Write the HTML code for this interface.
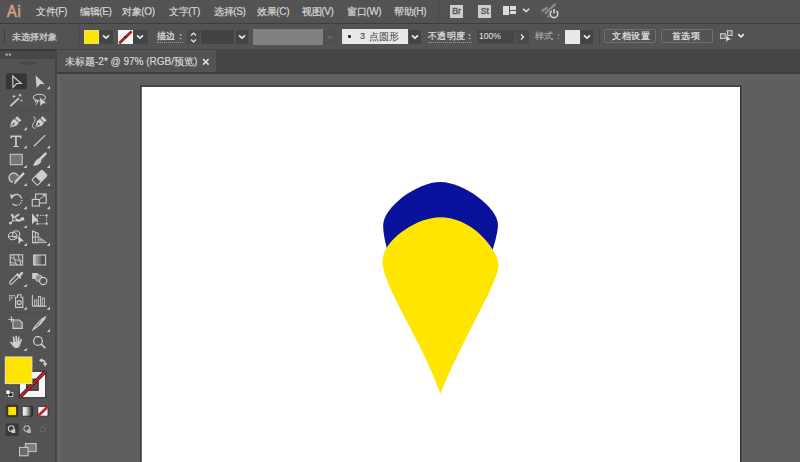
<!DOCTYPE html>
<html><head><meta charset="utf-8">
<style>
*{margin:0;padding:0;box-sizing:border-box}
html,body{width:800px;height:462px;overflow:hidden;background:#5e5e5e;font-family:"Liberation Sans",sans-serif;position:relative}
.a{position:absolute}
.t{position:absolute;white-space:nowrap;color:#d6d6d6;font-size:10px;line-height:12px;-webkit-text-stroke:0.2px currentColor}
#menubar{left:0;top:0;width:800px;height:24px;background:#535353;border-bottom:1px solid #3c3c3c}
#ctrl{left:0;top:24px;width:800px;height:26.6px;background:#535353;border-bottom:2px solid #383838}
#tabbar{left:56px;top:49px;width:744px;height:25px;background:#444444}
#tab{left:57px;top:50px;width:159px;height:22px;background:#535353}
#tabline{left:56px;top:72px;width:744px;height:2px;background:#3e3e3e}
#canvas{left:57px;top:74px;width:743px;height:388px;background:#5f5f5f}
#artboard{left:141px;top:86px;width:600px;height:380px;background:#fff;border:1px solid #2c2c2c;box-shadow:1px 1px 2px rgba(0,0,0,.35)}
#phead{left:0;top:50.6px;width:56px;height:8.4px;background:#474747}
#panel{left:0;top:59px;width:57px;height:403px;background:#535353;border-right:2px solid #454545}
#cedge{left:57px;top:74px;width:3px;height:388px;background:#636363}
#pgap{left:0;top:49px;width:57px;height:1px;background:#3a3a3a}
.cb{background:#444}
.cb svg{position:absolute;left:50%;top:50%;margin-left:-4px;margin-top:-2.5px}
.cb2{background:#4a4a4a}
.dl{height:1px;border-top:1px dotted #9a9a9a}
.btn{border:1px solid #707070;border-radius:1.5px}
.ico{background:#cdcdcd;color:#4e4e4e;font-size:8.6px;line-height:12.8px;text-align:center;letter-spacing:0px;-webkit-text-stroke:0.35px #4e4e4e}
</style></head><body>
<div id="menubar" class="a"></div>
<div id="ctrl" class="a"></div>
<div id="canvas" class="a"></div>
<div id="tabbar" class="a"></div>
<div id="tab" class="a"></div>
<div id="tabline" class="a"></div>
<svg class="a" style="left:0;top:0" width="800" height="462"><rect x="140" y="85.2" width="601.7" height="402" fill="none" stroke="#686868" stroke-width="1"/><rect x="140.95" y="86.15" width="599.8" height="400" fill="#fff" stroke="#323232" stroke-width="1.5"/></svg>
<div id="phead" class="a"></div>
<div id="panel" class="a"></div>
<div id="cedge" class="a"></div>

<!-- menu -->
<div class="t" style="left:6.6px;top:2.6px;font-size:16.5px;line-height:17px;color:#d49f7c;-webkit-text-stroke:0.7px #d49f7c;letter-spacing:0.9px;transform:scaleX(0.88);transform-origin:0 0">Ai</div>
<div class="t" style="left:36px;top:6px;letter-spacing:-0.35px">文件(F)</div>
<div class="t" style="left:80px;top:6px;letter-spacing:-0.35px">编辑(E)</div>
<div class="t" style="left:122px;top:6px;letter-spacing:-0.35px">对象(O)</div>
<div class="t" style="left:169px;top:6px;letter-spacing:-0.35px">文字(T)</div>
<div class="t" style="left:214px;top:6px;letter-spacing:-0.35px">选择(S)</div>
<div class="t" style="left:257px;top:6px;letter-spacing:-0.35px">效果(C)</div>
<div class="t" style="left:302px;top:6px;letter-spacing:-0.35px">视图(V)</div>
<div class="t" style="left:347px;top:6px;letter-spacing:-0.35px">窗口(W)</div>
<div class="t" style="left:394px;top:6px;letter-spacing:-0.35px">帮助(H)</div>



<!-- menubar icons -->
<div class="a" style="left:438px;top:1px;width:1px;height:21px;background:#474747"></div>
<div class="a ico" style="left:450px;top:5.3px;width:13.3px;height:12.5px">Br</div>
<div class="a ico" style="left:478.4px;top:5.3px;width:12.7px;height:12.5px">St</div>
<div class="a" style="left:503px;top:6px;width:6px;height:8.5px;background:#dcdcdc"></div>
<div class="a" style="left:510px;top:6px;width:6.3px;height:4px;background:#dcdcdc"></div>
<div class="a" style="left:510px;top:10.8px;width:6.3px;height:3.7px;background:#dcdcdc"></div>
<svg class="a" style="left:520px;top:6px" width="12" height="8"><path d="M3 2.7 L6.1 5.6 L9.2 2.7" fill="none" stroke="#e6e6e6" stroke-width="1.4"/></svg>
<svg class="a" style="left:538px;top:0px" width="26" height="22"><path d="M4.5 10.8 L8.8 8 M7.8 13.2 L16.8 4.5 M10.5 16.5 L13.8 11.5" stroke="#8c8c8c" stroke-width="2.3" fill="none" stroke-linecap="round"/><circle cx="16" cy="13.8" r="5.4" fill="#535353"/><path d="M13.6 10.9 A3.8 3.8 0 1 0 18.4 10.9" fill="none" stroke="#d4d4d4" stroke-width="1.6"/><line x1="16" y1="9" x2="16" y2="13.6" stroke="#d4d4d4" stroke-width="1.6"/></svg>

<!-- control bar -->
<div class="a" style="left:3.5px;top:30px;width:1.5px;height:14px;background:#3e3e3e"></div>
<div class="t" style="left:12px;top:30.5px;font-size:9.4px;line-height:11px;color:#cdcdcd;letter-spacing:0.1px;-webkit-text-stroke:0.3px #cdcdcd">未选择对象</div>
<div class="a" style="left:79px;top:27px;width:1px;height:19px;background:#4a4a4a"></div>
<div class="a" style="left:84px;top:29.5px;width:15px;height:14.5px;background:#ffe600;border:1px solid #e9e27a"></div>
<div class="a cb" style="left:99.5px;top:29.5px;width:13px;height:14.5px"><svg width="8" height="6"><path d="M1 1.3 L4 4.2 L7 1.3" fill="none" stroke="#f0f0f0" stroke-width="1.6"/></svg></div>
<div class="a" style="left:118px;top:29.5px;width:15px;height:14.5px;background:#f4f4f4"></div>
<svg class="a" style="left:118px;top:29.5px" width="15" height="15"><line x1="1.3" y1="13.2" x2="13.5" y2="1.5" stroke="#6a2a2a" stroke-width="2.6"/><line x1="1.3" y1="13.2" x2="13.5" y2="1.5" stroke="#d01818" stroke-width="1.7"/><circle cx="7.3" cy="7.2" r="1.4" fill="#5a2a2a"/></svg>
<div class="a cb" style="left:133px;top:29.5px;width:13.5px;height:14.5px"><svg width="8" height="6"><path d="M1 1.3 L4 4.2 L7 1.3" fill="none" stroke="#f0f0f0" stroke-width="1.6"/></svg></div>
<div class="a" style="left:147px;top:27px;width:1px;height:19px;background:#4a4a4a"></div>
<div class="t" style="left:157px;top:31px;font-size:8.9px;line-height:11px;letter-spacing:0.3px;color:#e2e2e2">描边：</div>
<div class="a dl" style="left:157px;top:42px;width:26px"></div>
<div class="a cb2" style="left:187px;top:29.5px;width:13px;height:14.5px"></div>
<svg class="a" style="left:187px;top:29.5px" width="13" height="15"><path d="M4 5.5 L6.5 3 L9 5.5 M4 9.5 L6.5 12 L9 9.5" fill="none" stroke="#e8e8e8" stroke-width="1.2"/></svg>
<div class="a" style="left:201px;top:29.5px;width:33px;height:14.5px;background:#434343"></div>
<div class="a cb" style="left:235.5px;top:29.5px;width:12.5px;height:14.5px"><svg width="8" height="6"><path d="M1 1.3 L4 4.2 L7 1.3" fill="none" stroke="#f0f0f0" stroke-width="1.6"/></svg></div>
<div class="a" style="left:252.75px;top:28.75px;width:70px;height:16px;background:#808080"></div>
<div class="a" style="left:323px;top:29.5px;width:14px;height:14.5px;background:#505050"></div>
<svg class="a" style="left:323px;top:29.5px" width="14" height="15"><path d="M4.5 6 L7 8.5 L9.5 6" fill="none" stroke="#6e6e6e" stroke-width="1.3"/></svg>
<div class="a" style="left:341.5px;top:29px;width:66.5px;height:15px;background:#e8e8e8"></div>
<div class="a" style="left:348.2px;top:35.2px;width:2.4px;height:2.4px;background:#222;border-radius:1.2px"></div>
<div class="t" style="left:360px;top:31px;font-size:9px;line-height:11px;color:#2e2e2e;-webkit-text-stroke:0px">3</div>
<div class="t" style="left:368.5px;top:31px;font-size:9.5px;line-height:11px;color:#3a3a3a;-webkit-text-stroke:0px">点圆形</div>
<div class="a cb" style="left:409px;top:29.5px;width:12px;height:14.5px"><svg width="8" height="6"><path d="M1 1.3 L4 4.2 L7 1.3" fill="none" stroke="#f0f0f0" stroke-width="1.6"/></svg></div>
<div class="t" style="left:428px;top:31px;font-size:8.9px;line-height:11px;letter-spacing:0.3px;color:#e2e2e2">不透明度：</div>
<div class="a dl" style="left:428px;top:42px;width:44px"></div>
<div class="a" style="left:476.5px;top:29.5px;width:38.5px;height:14px;background:#464646;border:1px solid #4c4c4c"></div>
<div class="t" style="left:479px;top:31px;font-size:8.6px;line-height:11px;color:#e6e6e6;-webkit-text-stroke:0px">100%</div>
<div class="a" style="left:516px;top:29.5px;width:13px;height:14px;background:#4a4a4a"></div>
<svg class="a" style="left:516px;top:29.5px" width="13" height="14"><path d="M5 4.5 L7.5 7 L5 9.5" fill="none" stroke="#e8e8e8" stroke-width="1.3"/></svg>
<div class="t" style="left:534.5px;top:31px;font-size:8.9px;line-height:11px;letter-spacing:0.5px;color:#a6a6a6">样式：</div>
<div class="a" style="left:565px;top:29.5px;width:15px;height:14.5px;background:#e8e8e8"></div>
<div class="a cb" style="left:581px;top:29.5px;width:12px;height:14.5px"><svg width="8" height="6"><path d="M1 1.3 L4 4.2 L7 1.3" fill="none" stroke="#f0f0f0" stroke-width="1.6"/></svg></div>
<div class="a" style="left:598.5px;top:27px;width:1px;height:19px;background:#4a4a4a"></div>
<div class="a btn" style="left:604px;top:28.7px;width:52px;height:14.8px"></div>
<div class="t" style="left:612px;top:31px;font-size:8.9px;line-height:11px;letter-spacing:0.7px;color:#e6e6e6">文档设置</div>
<div class="a btn" style="left:660.5px;top:28.7px;width:52px;height:14.8px"></div>
<div class="t" style="left:671.5px;top:31px;font-size:8.9px;line-height:11px;letter-spacing:0.8px;color:#e6e6e6">首选项</div>
<svg class="a" style="left:714px;top:26px" width="36" height="22"><path d="M6.40 7.50 Q9.00 8.30 11.60 7.50 Q10.80 10.10 11.60 12.70 Q9.00 11.90 6.40 12.70 Q7.20 10.10 6.40 7.50 Z M13.10 4.50 Q15.70 5.30 18.30 4.50 Q17.50 7.10 18.30 9.70 Q15.70 8.90 13.10 9.70 Q13.90 7.10 13.10 4.50 Z" fill="#6a6a6a" stroke="#d6d6d6" stroke-width="1"/><path d="M11.9 9 L17.4 13.8 L14.2 14 L12.1 16.4 Z" fill="#e4e4e4" stroke="#535353" stroke-width="0.5"/><path d="M24.2 8.2 L27 10.9 L29.8 8.2" fill="none" stroke="#ececec" stroke-width="1.6"/></svg>


<!-- toolbar -->
<svg class="a" style="left:0;top:0" width="57" height="462">
<rect x="20" y="62.3" width="15" height="2.3" fill="#474747"/>
<path d="M5 54.6 L7.5 53 L7.5 56.2 Z M8.2 54.6 L10.7 53 L10.7 56.2 Z" fill="#bdbdbd"/>
<g fill="#4e4e4e"><rect x="2" y="110.6" width="52" height="0.8"/><rect x="2" y="188.2" width="52" height="0.8"/><rect x="2" y="246.2" width="52" height="0.8"/><rect x="2" y="312" width="52" height="0.8"/></g>
<rect x="5.9" y="73.3" width="21" height="16" rx="2" fill="#363636"/>
<path d="M12.7 76 L21.2 83.5 L16.7 83.5 L13 87.4 Z" fill="none" stroke="#cdcdcd" stroke-width="1.2"/>
<path d="M35.6 75.3 L44.8 84.2 L40.2 83.9 L36.6 87.9 Z" fill="#cdcdcd"/>
<path d="M46.8 89.2 L50 89.2 L50 86.0 Z" fill="#cdcdcd"/>
<line x1="10.8" y1="105.6" x2="18.4" y2="98.6" stroke="#cdcdcd" stroke-width="1.8" stroke-linecap="round"/>
<path d="M14 94.6 L14.6 95.8 L15.8 96.4 L14.6 97 L14 98.2 L13.4 97 L12.2 96.4 L13.4 95.8 Z M20 93.4 L20.6 94.6 L21.8 95.2 L20.6 95.8 L20 97 L19.4 95.8 L18.2 95.2 L19.4 94.6 Z M21.4 99.2 L21.9 100.1 L22.8 100.5 L21.9 100.9 L21.4 101.8 L20.9 100.9 L20 100.5 L20.9 100.1 Z" fill="#cdcdcd"/>
<ellipse cx="39.4" cy="97.6" rx="6" ry="3.3" fill="none" stroke="#cdcdcd" stroke-width="1.1"/><circle cx="36.4" cy="101.2" r="1.2" fill="none" stroke="#cdcdcd" stroke-width="1"/><path d="M37.4 101.6 C37.4 103 36.6 104.2 35.8 105.2" fill="none" stroke="#cdcdcd" stroke-width="1"/>
<path d="M39.7 96.9 L47 103.4 L43.2 103.6 L40 106.5 Z" fill="#d0d0d0" stroke="#535353" stroke-width="0.6"/>
<g transform="translate(16.9,120.6) rotate(45)"><path d="M0 10 L-3.4 4 L-3 0.4 L3 0.4 L3.4 4 Z" fill="#cdcdcd"/><rect x="-2.9" y="-3.4" width="5.8" height="3" fill="#cdcdcd"/><line x1="0" y1="10" x2="0" y2="5" stroke="#535353" stroke-width="0.9"/><circle cx="0" cy="4.6" r="1" fill="#535353"/></g>
<path d="M23.6 130.2 L26.8 130.2 L26.8 126.99999999999999 Z" fill="#cdcdcd"/>
<g transform="translate(42.2,120.6) rotate(45)"><path d="M0 10 L-3.4 4 L-3 0.4 L3 0.4 L3.4 4 Z" fill="#cdcdcd"/><rect x="-2.9" y="-3.4" width="5.8" height="3" fill="#cdcdcd"/><line x1="0" y1="10" x2="0" y2="5" stroke="#535353" stroke-width="0.9"/><circle cx="0" cy="4.6" r="1" fill="#535353"/></g>
<path d="M33.4 117.2 C35.4 116.6 35.6 119.2 34.6 121.2 C33.2 124 31.4 126.4 33.4 127.9 L35.2 128.4" fill="none" stroke="#cdcdcd" stroke-width="1"/>
<path d="M10.5 135.6 H21.4 V138.4 H20.4 L20 137 H16.8 V145.9 H18.8 V147.1 H13.1 V145.9 H15.1 V137 H11.9 L11.5 138.4 H10.5 Z" fill="#cdcdcd"/>
<path d="M23.6 148.4 L26.8 148.4 L26.8 145.20000000000002 Z" fill="#cdcdcd"/>
<line x1="33.9" y1="146.2" x2="45.2" y2="135.1" stroke="#cdcdcd" stroke-width="1.2"/>
<path d="M46.8 148.4 L50 148.4 L50 145.20000000000002 Z" fill="#cdcdcd"/>
<rect x="10.2" y="154.3" width="12" height="10.4" fill="#767676" stroke="#cdcdcd" stroke-width="1"/>
<path d="M23.6 167.9 L26.8 167.9 L26.8 164.70000000000002 Z" fill="#cdcdcd"/>
<line x1="45.6" y1="153.6" x2="40.2" y2="159" stroke="#cdcdcd" stroke-width="2.6" stroke-linecap="round"/>
<path d="M38.8 158.2 L41.4 160.8 C40.6 164 37 165.8 33.2 165.8 C34.2 162.4 36 159.4 38.8 158.2 Z" fill="#cdcdcd"/>
<path d="M46.8 167.9 L50 167.9 L50 164.70000000000002 Z" fill="#cdcdcd"/>
<path d="M18.2 176.2 A4.7 4.7 0 1 0 12.8 182.3" fill="#6e6e6e" stroke="#cdcdcd" stroke-width="1.3"/>
<line x1="23.4" y1="173.6" x2="15.6" y2="181.6" stroke="#cdcdcd" stroke-width="2.4" stroke-linecap="round"/>
<path d="M14.6 182.2 L16.4 183.2 L14 184.3 Z" fill="#cdcdcd"/>
<path d="M23.6 186.1 L26.8 186.1 L26.8 182.9 Z" fill="#cdcdcd"/>
<g transform="translate(39.6,177.6) rotate(-45)"><rect x="-7" y="-3.9" width="14" height="7.8" rx="1" fill="none" stroke="#cdcdcd" stroke-width="1.1"/><rect x="-2.4" y="-3.9" width="9.4" height="7.8" rx="1" fill="#cdcdcd"/></g>
<path d="M46.8 186.1 L50 186.1 L50 182.9 Z" fill="#cdcdcd"/>
<path d="M12 196.6 A5.4 5.4 0 1 1 12.4 203.6" fill="none" stroke="#cdcdcd" stroke-width="1.3" stroke-dasharray="12 1.2 1.2 1.2 1.2 1.2 1.2 1.2"/>
<path d="M9.8 194.2 L14.6 195.6 L11.4 199.2 Z" fill="#cdcdcd"/>
<path d="M23.6 209.2 L26.8 209.2 L26.8 206.0 Z" fill="#cdcdcd"/>
<rect x="35.6" y="194" width="10.6" height="9" fill="none" stroke="#cdcdcd" stroke-width="1.1"/>
<rect x="32.3" y="199.4" width="7" height="6.6" fill="#535353" stroke="#cdcdcd" stroke-width="1.1"/>
<path d="M39.5 199.5 L44.6 195" stroke="#cdcdcd" stroke-width="1"/><path d="M45.4 194.2 L45.4 197.4 L42.2 194.2 Z" fill="#cdcdcd"/>
<path d="M46.8 209.2 L50 209.2 L50 206.0 Z" fill="#cdcdcd"/>
<path d="M12 214.8 C12.6 217.2 14.6 218.8 16.2 219.8 C18.2 221.2 20.6 221 21.6 219 C22.2 217.8 22.9 217.6 23.3 219.4" fill="none" stroke="#cdcdcd" stroke-width="2.3" stroke-linecap="round"/><path d="M15.4 216.8 L18.6 214.6" stroke="#cdcdcd" stroke-width="1.8" stroke-linecap="round"/><circle cx="14.4" cy="219.2" r="1.9" fill="#6a6a6a" stroke="#cdcdcd" stroke-width="0.9"/><circle cx="10.4" cy="223.2" r="1.4" fill="#cdcdcd"/><path d="M10.4 223.2 L13.2 220.6" stroke="#cdcdcd" stroke-width="1.1"/>
<path d="M23.6 228.1 L26.8 228.1 L26.8 224.9 Z" fill="#cdcdcd"/>
<path d="M32 213.2 L32 224.4 L34.8 221.4 L38.8 221.6 Z" fill="#cdcdcd"/>
<rect x="37.4" y="215.4" width="9.2" height="8.4" fill="none" stroke="#cdcdcd" stroke-width="1" stroke-dasharray="1.4 1.2"/>
<g fill="#cdcdcd"><rect x="36.4" y="214.4" width="2" height="2"/><rect x="45.6" y="214.4" width="2" height="2"/><rect x="45.6" y="222.8" width="2" height="2"/><rect x="36.4" y="222.8" width="2" height="2"/></g>
<ellipse cx="12.6" cy="236" rx="4.2" ry="3.8" fill="none" stroke="#cdcdcd" stroke-width="1.1"/><circle cx="16.2" cy="234.4" r="3.6" fill="none" stroke="#cdcdcd" stroke-width="1.1"/><path d="M8.6 236.4 H16" stroke="#cdcdcd" stroke-width="0.9"/>
<path d="M17.8 234.8 L24.6 241.6 L21 241.6 L19 244.2 L18.2 243.6 Z" fill="#cdcdcd" stroke="#535353" stroke-width="0.6"/>
<path d="M23.8 246 L27 246 L27 242.8 Z" fill="#cdcdcd"/>
<path d="M32.6 231 L38.2 233.4 V242.6 H32.6 Z" fill="none" stroke="#cdcdcd" stroke-width="1.1"/><path d="M32.6 237 H38.2 M35.4 232.2 V242.6" stroke="#cdcdcd" stroke-width="0.9"/><path d="M38.2 236.4 L46.4 242.6 H38.2 Z" fill="#7a7a7a"/><path d="M38.2 242.6 H46.4 M38.2 239.8 H43 M38.2 236.6 L46.4 242.6" stroke="#cdcdcd" stroke-width="0.8" fill="none"/>
<path d="M46.8 246 L50 246 L50 242.8 Z" fill="#cdcdcd"/>
<rect x="10.2" y="254.8" width="12.4" height="10.2" fill="#5a5a5a" stroke="#cdcdcd" stroke-width="1.1"/>
<path d="M10.2 257.6 C12.6 256.6 14.2 260.8 17.6 260.2 C19.6 259.8 20.8 261.8 22.6 261.6 M12.6 254.8 C15.4 257.6 14.2 261.8 16.8 265 M18.2 254.8 C17.6 257.8 21.2 259.8 20.4 265 M10.2 262.6 C12.6 262 14 263.8 16.2 263" fill="none" stroke="#cdcdcd" stroke-width="0.9"/>
<defs><linearGradient id="g1" x1="0" x2="1"><stop offset="0" stop-color="#c4c4c4"/><stop offset="0.75" stop-color="#4e4e4e"/><stop offset="1" stop-color="#5a5a5a"/></linearGradient>
<linearGradient id="g2" x1="0" x2="1"><stop offset="0" stop-color="#f4f4f4"/><stop offset="0.35" stop-color="#e0e0e0"/><stop offset="1" stop-color="#1a1a1a"/></linearGradient></defs>
<rect x="33.6" y="255" width="12" height="10" fill="url(#g1)" stroke="#cdcdcd" stroke-width="1.1"/>
<path d="M10.4 284.2 C9.2 283.2 9.6 282 10.6 281 L17 274.6 L19.2 276.8 L12.8 283.2 C11.8 284.2 11.2 284.8 10.4 284.2 Z" fill="none" stroke="#cdcdcd" stroke-width="1.1"/>
<path d="M16 274.4 L20.4 278.8 L21.6 277.6 L20.4 276.4 L23 273.8 C23.6 272.8 22.8 271.4 21.6 271.8 L18.8 274.4 L17.4 273 Z" fill="#cdcdcd"/>
<path d="M23.6 287 L26.8 287 L26.8 283.8 Z" fill="#cdcdcd"/>
<rect x="32.2" y="273" width="5.6" height="6" fill="#cdcdcd"/>
<circle cx="38.8" cy="278.2" r="3.4" fill="#8e8e8e" stroke="#cdcdcd" stroke-width="0.8"/>
<circle cx="43.2" cy="281" r="3.6" fill="#535353" stroke="#cdcdcd" stroke-width="1.2"/>
<g fill="#cdcdcd"><rect x="9" y="295" width="1.4" height="1.4"/><rect x="11.2" y="295" width="1.4" height="1.4"/><rect x="13.4" y="295" width="1.4" height="1.4"/><rect x="9" y="297.2" width="1.4" height="1.4"/><rect x="11.2" y="297.2" width="1.4" height="1.4"/><rect x="9" y="299.4" width="1.4" height="1.4"/></g>
<path d="M17.6 294.8 H21 V297.2 H22.8 V307.4 H15.6 V297.2 H17.6 Z" fill="none" stroke="#cdcdcd" stroke-width="1.1"/>
<circle cx="19.2" cy="302.6" r="2" fill="none" stroke="#cdcdcd" stroke-width="1.1"/>
<path d="M23.6 309.8 L26.8 309.8 L26.8 306.6 Z" fill="#cdcdcd"/>
<path d="M32.4 294.8 V306.2 H46.6" fill="none" stroke="#cdcdcd" stroke-width="1"/>
<g fill="none" stroke="#cdcdcd" stroke-width="0.9"><rect x="34.6" y="300" width="2.2" height="5.8"/><rect x="38.4" y="296.4" width="2.2" height="9.4"/><rect x="42.2" y="298" width="2.2" height="7.8"/></g>
<path d="M46.8 309.8 L50 309.8 L50 306.6 Z" fill="#cdcdcd"/>
<path d="M8.4 319.4 H14 M11.4 316.2 V322" stroke="#cdcdcd" stroke-width="1"/>
<path d="M13 320 H19.4 L22.2 322.8 V328.4 H13 Z" fill="#737373" stroke="#cdcdcd" stroke-width="1.1"/>
<path d="M45.4 317 C44 320.6 39.8 325.2 33 329.8 C34 327.4 35.4 325.8 36.4 324.6 L42.2 318.8 Z" fill="none" stroke="#cdcdcd" stroke-width="1.1"/>
<path d="M43.6 317.8 L45.4 317 L44.4 319.6 C42.8 321.8 40 324.6 36.8 326.8 L38 324.8 Z" fill="#cdcdcd"/>
<path d="M46.8 332 L50 332 L50 328.8 Z" fill="#cdcdcd"/>
<g stroke="#cdcdcd" stroke-width="1.7" stroke-linecap="round" fill="none"><path d="M13.5 337.4 L14.3 342.4 M16.2 336.7 L16.4 342 M18.8 337.3 L18.3 342.2 M21.3 339.7 L19.6 343.4 M10.9 342.3 L13.4 345.2"/></g><path d="M12.8 342 L20.4 341.6 L20 345.6 C19.2 347.6 17.6 348.1 16 348.1 C14.2 348.1 13 346.8 12.6 345 Z" fill="#cdcdcd"/>
<path d="M23.6 351 L26.8 351 L26.8 347.8 Z" fill="#cdcdcd"/>
<circle cx="38" cy="341" r="4.4" fill="none" stroke="#cdcdcd" stroke-width="1.3"/>
<line x1="41.2" y1="344.2" x2="45.4" y2="348.2" stroke="#cdcdcd" stroke-width="1.6"/>
<!-- stroke swatch -->
<rect x="19.3" y="371.3" width="26.4" height="26.4" fill="#f6f6f6" stroke="#2a2a2a" stroke-width="1"/>
<rect x="26.6" y="379.1" width="11.6" height="11.2" fill="#535353" stroke="#2a2a2a" stroke-width="1"/>
<line x1="19.8" y1="397.2" x2="45.4" y2="371.6" stroke="#2a1414" stroke-width="3.6"/>
<line x1="19.8" y1="397.2" x2="45.4" y2="371.6" stroke="#c8202a" stroke-width="2.2"/>
<!-- fill swatch -->
<rect x="5.3" y="357" width="26.6" height="26.6" fill="#ffe400" stroke="#e9e7c6" stroke-width="1"/>
<path d="M39 360.3 L42.2 358.2 L42.2 362.4 Z M42.8 363.2 L47.4 363.2 L45.1 366.6 Z" fill="#d8d8d8"/><path d="M41.6 360.3 C43.8 360.3 45.1 361.2 45.1 363.6" fill="none" stroke="#d8d8d8" stroke-width="1.4"/>
<rect x="8.6" y="392.4" width="4.2" height="4.2" fill="#222" stroke="#cdcdcd" stroke-width="0.9"/>
<rect x="5.8" y="389.9" width="4.4" height="4.4" fill="#f4f4f4" stroke="#222" stroke-width="0.7"/>
<!-- color mode -->
<rect x="5.8" y="404.6" width="12.6" height="12.6" rx="1.5" fill="#373737"/>
<rect x="7.9" y="406.6" width="8.4" height="8.8" fill="#ffe400" stroke="#222" stroke-width="0.6"/>
<rect x="22.2" y="406.4" width="10.2" height="9.8" rx="1" fill="url(#g2)" stroke="#222" stroke-width="0.8"/>
<rect x="37.8" y="406.4" width="10.2" height="9.8" rx="1" fill="#f4f4f4" stroke="#222" stroke-width="0.8"/>
<line x1="38.4" y1="415.8" x2="47.6" y2="406.8" stroke="#c8202a" stroke-width="2.6"/>
<!-- drawing modes -->
<rect x="5.6" y="423.5" width="13" height="12.4" rx="1" fill="#393939"/>
<rect x="21.4" y="423.5" width="12.4" height="12.4" rx="1" fill="none" stroke="#5a5a5a" stroke-width="0.7"/>
<rect x="36" y="423.5" width="13.4" height="12.4" rx="1" fill="none" stroke="#585858" stroke-width="0.7"/>
<circle cx="11.2" cy="428.6" r="2.9" fill="none" stroke="#cdcdcd" stroke-width="1.1"/><rect x="11.6" y="429.4" width="3.6" height="3.6" fill="#cdcdcd"/>
<circle cx="26.8" cy="428.6" r="2.9" fill="none" stroke="#bbbbbb" stroke-width="1.1"/><rect x="27.2" y="429.4" width="3.6" height="3.6" fill="#bbbbbb"/>
<circle cx="42.6" cy="429.4" r="2.6" fill="none" stroke="#6a6a6a" stroke-width="1"/>
<!-- screen mode -->
<rect x="25.4" y="443.6" width="10.8" height="8" fill="#7c7c7c" stroke="#cdcdcd" stroke-width="1"/>
<rect x="19.5" y="447.4" width="8.6" height="8.4" fill="#6a6a6a" stroke="#cdcdcd" stroke-width="1"/>
</svg>

<!-- tab text -->
<svg class="a" style="left:201px;top:57px" width="10" height="10"><path d="M2 2 L7.6 7.6 M7.6 2 L2 7.6" stroke="#e4e4e4" stroke-width="1.5"/></svg>
<div class="t" style="left:65px;top:56px">未标题-2* @ 97% (RGB/预览)</div>

<!-- shapes -->
<svg class="a" style="left:0;top:0" width="800" height="462">
<path fill="#0a119c" d="M440.5 181.9 C463.46 181.9 497.95 207.32 497.95 224.73 C497.95 241.57 479.34 285.83 479.34 285.83 L395.48 273 C395.48 273 383.18 245.37 383.18 225.23 C383.18 207.11 417.07 181.9 440.5 181.9 Z"/>
<path fill="#ffe600" d="M440.2 217.2 C473.06 217.2 498.48 250.65 498.48 265.23 C498.48 281.99 465.68 332.55 440.3 393.7 C421.43 339.21 382.46 286.71 382.46 261.27 C382.46 240.41 416.37 217.2 440.2 217.2 Z"/>
</svg>
</body></html>
